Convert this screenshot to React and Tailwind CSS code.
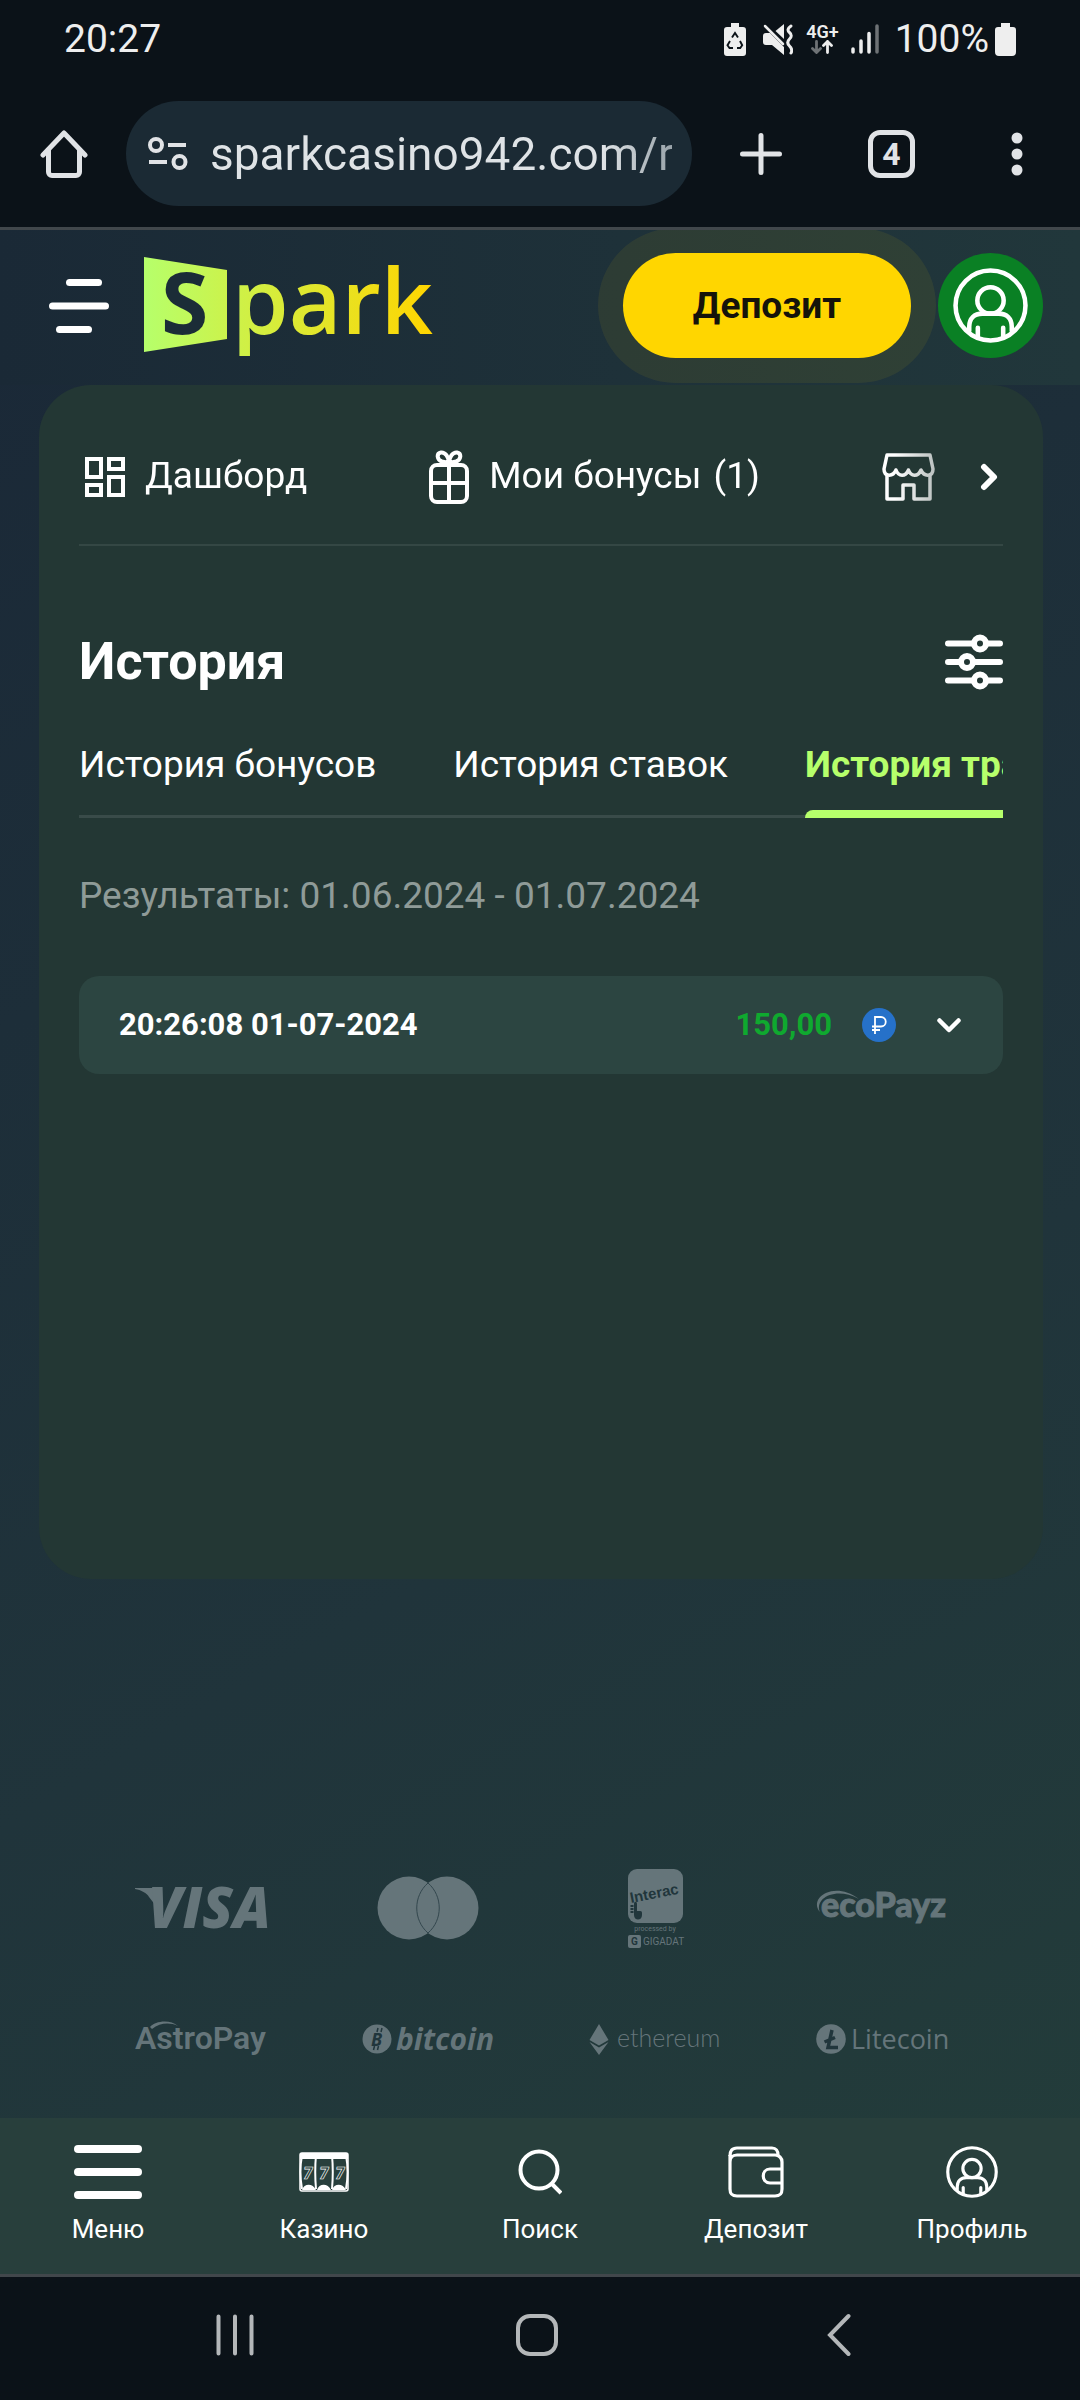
import React from 'react';

const profileLinks = [
  { id: 'dashboard', label: 'Дашборд', Icon: DashboardIcon },
  { id: 'bonuses', label: 'Мои бонусы', count: 1, Icon: GiftIcon },
  { id: 'shop', Icon: ShopIcon },
];

const historyTabs = [
  { id: 'bonuses', label: 'История бонусов' },
  { id: 'bets', label: 'История ставок' },
  { id: 'transactions', label: 'История транзакций' },
];

const bottomLinks = [
  { id: 'menu', label: 'Меню', Icon: MenuIcon },
  { id: 'casino', label: 'Казино', Icon: SlotsIcon },
  { id: 'search', label: 'Поиск', Icon: SearchIcon },
  { id: 'deposit', label: 'Депозит', Icon: WalletIcon },
  { id: 'profile', label: 'Профиль', Icon: ProfileIcon },
];

const payments = [
  { id: 'visa', Logo: VisaLogo },
  { id: 'mastercard', Logo: MastercardLogo },
  { id: 'interac', Logo: InteracLogo },
  { id: 'ecopayz', Logo: EcoPayzLogo },
  { id: 'astropay', Logo: AstroPayLogo },
  { id: 'bitcoin', Logo: BitcoinLogo },
  { id: 'ethereum', Logo: EthereumLogo },
  { id: 'litecoin', Logo: LitecoinLogo },
];

/* ---------- icons ---------- */

function DashboardIcon() {
  return (
    <svg width="40" height="42" viewBox="0 0 40 42" fill="none" stroke="currentColor" strokeWidth="4">
      <path d="M2 3h14v18H2zM24 3h14v10H24zM2 29h14v10H2zM24 21h14v18H24z" />
    </svg>
  );
}

function GiftIcon() {
  return (
    <svg width="40" height="54" viewBox="0 0 40 54" fill="none" stroke="currentColor" strokeWidth="4">
      <rect x="2" y="15" width="36" height="37" rx="6" />
      <path d="M20 14v38M2 33h36" />
      <path d="M20 13C20 7 16 2 12 2.500 7 3.500 8 10 13 11.500zM20 13C20 7 24 2 28 2.500 33 3.500 32 10 27 11.500z" />
    </svg>
  );
}

function ShopIcon() {
  return (
    <svg width="53" height="48" viewBox="0 0 53 48" fill="none" stroke="currentColor" strokeWidth="3.500" strokeLinejoin="round">
      <path d="M5 2h43l3 14c0 8-9 8-12 1-3 7-10 7-12.500 0-3 7-10 7-12.500 0-3 7-12 7-12-1z" />
      <path d="M5 22v24h16V32h11v14h16V22" />
    </svg>
  );
}

function ProfileIcon({ className = 'h-[52px] w-[52px]' }) {
  return (
    <svg className={className} viewBox="0 0 74 74" fill="none" stroke="currentColor" strokeWidth="4.500" strokeLinecap="round">
      <circle cx="37" cy="37" r="34.500" />
      <circle cx="37" cy="32" r="13" />
      <path d="M16 62v-4c0-8 5-13 13-13h16c8 0 13 5 13 13v4" />
      <path d="M24.500 59v9M49.500 59v9" />
    </svg>
  );
}

function MenuIcon() {
  return (
    <svg width="68" height="54" viewBox="0 0 68 54" fill="currentColor">
      <rect width="68" height="8" rx="4" />
      <rect y="23" width="68" height="8" rx="4" />
      <rect y="46" width="68" height="8" rx="4" />
    </svg>
  );
}

function SlotsIcon() {
  return (
    <svg width="50" height="40" viewBox="0 0 50 40" fill="none" stroke="currentColor">
      <rect x="1" y="1" width="48" height="38" rx="2" strokeWidth="1.500" />
      <path d="M1 1h48v6H1z" fill="currentColor" stroke="none" />
      <path d="M3 3c-2 11-2 23 0 34M17 3c-1 11-1 23 0 34M33 3c1 11 1 23 0 34M47 3c2 11 2 23 0 34" strokeWidth="2" />
      <path d="M3 38c2-7 11-7 14 0zM18 38c2-7 11-7 14 0zM33 38c2-7 11-7 14 0z" fill="currentColor" stroke="none" />
      <g strokeWidth="0.600" fontFamily="Roboto, sans-serif" fontSize="16" fontWeight="900" fontStyle="italic" textAnchor="middle">
        <text x="9" y="27">7</text>
        <text x="25" y="27">7</text>
        <text x="41" y="27">7</text>
      </g>
    </svg>
  );
}

function SearchIcon() {
  return (
    <svg width="44" height="46" viewBox="0 0 44 46" fill="none" stroke="currentColor" strokeWidth="4">
      <circle cx="21" cy="21" r="18.500" />
      <path d="M33 34l10 10" />
    </svg>
  );
}

function WalletIcon() {
  return (
    <svg width="56" height="52" viewBox="0 0 56 52" fill="none" stroke="currentColor" strokeWidth="3.200">
      <path d="M2 10c0-5 2-8 7-8h35c4 0 6 3 6 7" />
      <path d="M2 9v34c0 5 2 7 7 7h38c5 0 7-2 7-7V16c0-4-3-7-7-7H9C4 9 2 12 2 16" />
      <path d="M54 23H42c-9 0-9 14 0 14h12" />
    </svg>
  );
}

function FilterIcon() {
  return (
    <svg width="58" height="56" viewBox="0 0 58 56" fill="none" stroke="currentColor" strokeWidth="6" strokeLinecap="round">
      <path d="M3 9.500h26M42 9.500h13M3 28h13M29 28h26M3 46.500h26M42 46.500h13" />
      <circle cx="35" cy="9.500" r="6" />
      <circle cx="22" cy="28" r="6" />
      <circle cx="35" cy="46.500" r="6" />
    </svg>
  );
}

function RecycleBatteryIcon() {
  return (
    <svg width="22" height="33" viewBox="0 0 22 33" fill="#eeeeee">
      <path d="M7 0h8v4h4a3 3 0 0 1 3 3v23a3 3 0 0 1-3 3H3a3 3 0 0 1-3-3V7a3 3 0 0 1 3-3h4z" />
      <path d="M8 14.500l3-4.500 3 4.500M16 18l2.200 4.200-2 2.800H13M9 25H5.500l-2-2.800L6 18" fill="none" stroke="#0b1218" strokeWidth="1.900" />
    </svg>
  );
}

function MutedIcon() {
  return (
    <svg width="30" height="31" viewBox="0 0 30 31" fill="#eeeeee">
      <path d="M0 12c0-2 1-3 3-3h4l14 14v8L9 21H3c-2 0-3-1-3-3z" />
      <path d="M21 0v15L12.500 7z" />
      <path d="M2 2l18 18" stroke="#eeeeee" strokeWidth="2.500" strokeLinecap="round" />
      <path d="M28 2q-5 3.500-1.500 6.500t0 6.500 0 7 1.500 7" fill="none" stroke="#eeeeee" strokeWidth="3" strokeLinecap="round" />
    </svg>
  );
}

function DataArrowsIcon() {
  return (
    <svg width="22" height="14" viewBox="0 0 22 14" fill="none" strokeWidth="2.800" strokeLinecap="round">
      <path d="M5.500 1.500v11M1.500 8.500l4 4 4-4" stroke="#6e7275" />
      <path d="M16.500 12.500v-11M12.500 5.500l4-4 4 4" stroke="#eeeeee" />
    </svg>
  );
}

function SignalIcon() {
  return (
    <svg width="28" height="30" viewBox="0 0 28 30" strokeWidth="3.500" strokeLinecap="round">
      <path d="M2 25v3M10 17v11M18 9.500V28" stroke="#eeeeee" />
      <path d="M26 2v26" stroke="#6e7275" />
    </svg>
  );
}

function BatteryIcon() {
  return (
    <svg width="21" height="33" viewBox="0 0 21 33" fill="#eeeeee">
      <path d="M6 0h9v4h3a3 3 0 0 1 3 3v22a4 4 0 0 1-4 4H4a4 4 0 0 1-4-4V7a3 3 0 0 1 3-3h3z" />
    </svg>
  );
}

/* ---------- logos ---------- */

function SparkLogo() {
  return (
    <svg className="overflow-visible" width="294" height="104" viewBox="0 0 294 104">
      <defs>
        <linearGradient id="spark" gradientUnits="userSpaceOnUse" x1="0" y1="0" x2="288" y2="0">
          <stop offset="0" stopColor="#b6ff6b" />
          <stop offset="1" stopColor="#ffd500" />
        </linearGradient>
      </defs>
      <path d="M0 3l83 13v69L0 98z" fill="url(#spark)" />
      <text x="17" y="80" fontFamily="'Noto Sans', sans-serif" fontSize="86" fontWeight="700" fill="#1b2c37">S</text>
      <text x="88" y="80" fontFamily="'Open Sans', sans-serif" fontSize="91" fontWeight="600" fill="url(#spark)">park</text>
    </svg>
  );
}

function VisaLogo() {
  return (
    <svg className="overflow-visible" width="132" height="80" viewBox="0 0 132 80" fill="currentColor">
      <path d="M0 20h19c3 0 4 2 5 5l4 22-14-18c-2-4-8-7-14-8z" />
      <text x="13" y="60" fontFamily="'Open Sans', sans-serif" fontSize="56" fontWeight="800" fontStyle="italic">VISA</text>
    </svg>
  );
}

function MastercardLogo() {
  return (
    <svg width="132" height="80" viewBox="0 0 132 80" fill="currentColor">
      <circle cx="47" cy="40" r="31.500" />
      <circle cx="85" cy="40" r="31.500" />
      <path d="M66 15c-15 13-15 37 0 50 15-13 15-37 0-50z" fill="none" stroke="#33474e" strokeWidth="1" />
    </svg>
  );
}

function InteracLogo() {
  return (
    <svg className="overflow-visible" width="132" height="80" viewBox="0 0 132 80" fill="currentColor">
      <rect x="39" y="1" width="55" height="54" rx="9" />
      <text transform="translate(42 35) rotate(-11)" fontFamily="'Liberation Sans', sans-serif" fontSize="15" fontWeight="700" fill="#21363c">Interac</text>
      <path d="M45 36c0-3 3-3 3 0v7h3c2 0 2 1 2 3v1c0 6-8 6-8 0z" fill="#21363c" />
      <path d="M43 37v9" stroke="#21363c" strokeWidth="3" strokeDasharray="2 1" />
      <text x="66" y="63" fontFamily="Roboto, sans-serif" fontSize="7" textAnchor="middle">processed by</text>
      <rect x="39" y="67" width="13" height="13" rx="2" />
      <text x="42" y="77" fontFamily="Roboto, sans-serif" fontSize="10" fontWeight="700" fill="#21363c">G</text>
      <text x="54" y="77" fontFamily="Roboto, sans-serif" fontSize="10">GIGADAT</text>
    </svg>
  );
}

function EcoPayzLogo() {
  return (
    <svg className="overflow-visible" width="132" height="80" viewBox="0 0 132 80" fill="currentColor">
      <path d="M4 44C-8 30 18 12 43 31 20 18-2 30 4 44z" />
      <text x="5" y="49" fontFamily="Lato, sans-serif" fontSize="34" fontWeight="900" stroke="currentColor" strokeWidth="1">ecoPayz</text>
    </svg>
  );
}

function AstroPayLogo() {
  return (
    <svg className="overflow-visible" width="132" height="80" viewBox="0 0 132 80" fill="currentColor">
      <path d="M15 27c5-6 20-8 28-1-9-4-18-3-26 3z" />
      <text x="0" y="49" fontFamily="Roboto, sans-serif" fontSize="32" fontWeight="600">AstroPay</text>
    </svg>
  );
}

function BitcoinLogo() {
  return (
    <svg className="overflow-visible" width="132" height="80" viewBox="0 0 132 80" fill="currentColor">
      <circle cx="15" cy="39" r="14.500" />
      <text x="9" y="46" fontFamily="'Noto Sans', sans-serif" fontSize="18" fontWeight="700" fontStyle="italic" fill="#21363c">B</text>
      <path d="M15 32l1-4M19 32l1-4M11.500 50l1-4M15.500 50l1-4" stroke="#21363c" strokeWidth="1.500" />
      <text x="34" y="50" fontFamily="'Open Sans', sans-serif" fontSize="30" fontWeight="700" fontStyle="italic">bitcoin</text>
    </svg>
  );
}

function EthereumLogo() {
  return (
    <svg className="overflow-visible" width="132" height="80" viewBox="0 0 132 80" fill="currentColor">
      <path d="M10 24l9.500 16-9.500 5.500L.5 40zM.5 42l9.500 5.500 9.500-5.500L10 55z" />
      <text x="28" y="47" fontFamily="Lato, sans-serif" fontSize="25" fontWeight="300">ethereum</text>
    </svg>
  );
}

function LitecoinLogo() {
  return (
    <svg className="overflow-visible" width="132" height="80" viewBox="0 0 132 80" fill="currentColor">
      <circle cx="15" cy="39" r="14.800" />
      <path d="M16 30l-4 17.500h10M8.500 42l10.500-4.500" fill="none" stroke="#21363c" strokeWidth="3.500" />
      <text x="35" y="49" fontFamily="'Open Sans', sans-serif" fontSize="27">Litecoin</text>
    </svg>
  );
}

/* ---------- browser chrome ---------- */

function StatusBar() {
  return (
    <div className="flex h-20 items-center justify-between px-16 pb-0.5 text-[39px] leading-none text-[#eeeeee]">
      <span>20:27</span>
      <div className="flex items-center">
        <RecycleBatteryIcon />
        <span className="ml-[17px]"><MutedIcon /></span>
        <span className="ml-[13px] flex flex-col items-center">
          <span className="text-lg leading-4 font-semibold">4G+</span>
          <DataArrowsIcon />
        </span>
        <span className="ml-3"><SignalIcon /></span>
        <span className="ml-4 mr-1.5">100%</span>
        <BatteryIcon />
      </div>
    </div>
  );
}

function Toolbar() {
  return (
    <div className="flex h-[147px] items-center pl-10 pr-[57px] text-[#e1e3e6]">
      <button aria-label="Домой">
        <svg width="48" height="48" viewBox="0 0 48 48" fill="none" stroke="currentColor" strokeWidth="5" strokeLinecap="round" strokeLinejoin="round">
          <path d="M3 25L24 3l21 22M8.500 20v22a3.500 3.500 0 0 0 3.500 3.500h24a3.500 3.500 0 0 0 3.500-3.500V20" />
        </svg>
      </button>
      <div className="ml-[38px] flex h-[105px] min-w-0 flex-1 items-center rounded-full bg-[#1b2a34] pl-[22px] pr-5">
        <svg className="shrink-0" width="40" height="34" viewBox="0 0 40 34" fill="none" stroke="currentColor" strokeWidth="4">
          <circle cx="8" cy="8" r="6" />
          <path d="M20 8h18M1 25h18" />
          <circle cx="31.500" cy="25" r="6" />
        </svg>
        <input
          type="text"
          aria-label="Адрес"
          defaultValue="sparkcasino942.com/r"
          className="ml-[22px] w-full min-w-0 bg-transparent bg-gradient-to-r from-[#dfe3e6] from-85% to-[#9aa4aa] bg-clip-text text-[46px] leading-[60px] text-transparent outline-none"
        />
      </div>
      <button aria-label="Новая вкладка" className="ml-12">
        <svg width="42" height="42" viewBox="0 0 42 42" stroke="currentColor" strokeWidth="5" strokeLinecap="round">
          <path d="M21 2.500v37M2.500 21h37" />
        </svg>
      </button>
      <button className="ml-[86px] flex h-12 w-[47px] items-center justify-center rounded-xl border-5 border-current text-[32px] leading-none font-bold">
        4
      </button>
      <button aria-label="Ещё" className="ml-[96px]">
        <svg width="12" height="44" viewBox="0 0 12 44" fill="currentColor">
          <circle cx="6" cy="6" r="5.500" />
          <circle cx="6" cy="22" r="5.500" />
          <circle cx="6" cy="38" r="5.500" />
        </svg>
      </button>
    </div>
  );
}

function SystemBar() {
  return (
    <div className="grid h-[126px] grid-cols-3 items-center justify-items-center border-t-3 border-[#41474b] bg-[#0b1218] pb-2 pl-[84px] pr-[90px] text-[#b4b7b9]">
      <button aria-label="Недавние">
        <svg width="38" height="42" viewBox="0 0 38 42" stroke="currentColor" strokeWidth="4" strokeLinecap="round">
          <path d="M2.500 2.500v37M19 2.500v37M35.500 2.500v37" />
        </svg>
      </button>
      <button aria-label="Главный экран">
        <svg width="42" height="42" viewBox="0 0 42 42" fill="none" stroke="currentColor" strokeWidth="4">
          <rect x="2" y="2" width="38" height="38" rx="12" />
        </svg>
      </button>
      <button aria-label="Назад">
        <svg width="24" height="44" viewBox="0 0 24 44" fill="none" stroke="currentColor" strokeWidth="4" strokeLinecap="round">
          <path d="M21.500 3L3 22l18.500 19" />
        </svg>
      </button>
    </div>
  );
}

/* ---------- site ---------- */

function SiteHeader() {
  return (
    <header className="flex h-[155px] items-center overflow-hidden bg-gradient-to-r from-[#1a2936] to-[#21373b] pb-1 pl-[49px] pr-[37px]">
      <button aria-label="Меню" className="text-white">
        <svg width="60" height="54" viewBox="0 0 60 54" fill="currentColor">
          <rect x="17" width="36" height="7" rx="3.500" />
          <rect y="23.500" width="60" height="7" rx="3.500" />
          <rect x="7" y="47" width="36" height="7" rx="3.500" />
        </svg>
      </button>
      <a href="#home" aria-label="Spark" className="ml-[35px]"><SparkLogo /></a>
      <button className="ml-auto h-[105px] w-72 rounded-full bg-[#ffd600] text-[37px] font-bold text-[#15130a] shadow-[0_0_0_25px_rgba(255,214,0,0.07)]">
        Депозит
      </button>
      <button aria-label="Профиль" className="ml-[27px] flex size-[105px] items-center justify-center rounded-full bg-[#0a8024] text-white">
        <ProfileIcon className="size-[75px]" />
      </button>
    </header>
  );
}

function ProfileNav() {
  return (
    <nav className="flex h-[161px] items-center border-b-2 border-[#344744] pt-6">
      <ul className="flex min-w-0 flex-1 items-center gap-[122px] overflow-hidden pl-[6px] [mask-image:linear-gradient(to_right,#000_94%,#0009)]">
        {profileLinks.map(({ id, label, count, Icon }) => (
          <li key={id} className="shrink-0">
            <a href={`#${id}`} aria-label={label ? undefined : 'Магазин'} className="flex items-center gap-5">
              <Icon />
              {label && (
                <span className="flex gap-3 pb-0.5">
                  {label}
                  {count && <span>({count})</span>}
                </span>
              )}
            </a>
          </li>
        ))}
      </ul>
      <button aria-label="Вперёд" className="flex w-14 justify-end pr-[5px]">
        <svg width="18" height="28" viewBox="0 0 18 28" fill="none" stroke="currentColor" strokeWidth="6" strokeLinecap="round" strokeLinejoin="round">
          <path d="M4 4l10 10L4 24" />
        </svg>
      </button>
    </nav>
  );
}

function HistoryTabs() {
  return (
    <div role="tablist" className="flex gap-[77px] overflow-hidden pt-[49px] shadow-[inset_0_-3px_0_#394b49]">
      {historyTabs.map((tab) => {
        const active = tab.id === 'transactions';
        return (
          <button
            key={tab.id}
            role="tab"
            aria-selected={active}
            className={active ? 'shrink-0 font-bold whitespace-nowrap text-[#b6ff6b]' : 'shrink-0 whitespace-nowrap'}
          >
            <span className="block pb-[21px] leading-12">{tab.label}</span>
            <span className={active ? 'block h-2 rounded-t-lg bg-[#b6ff6b]' : 'block h-2'} />
          </button>
        );
      })}
    </div>
  );
}

function TransactionRow({ time, amount }) {
  return (
    <button className="mt-14 flex h-[98px] w-full items-center rounded-[20px] bg-[#2c4541] pl-10 pr-[42px] text-[31px] font-bold">
      <span>{time}</span>
      <span className="ml-auto text-[#0fa92f]">{amount}</span>
      <svg className="ml-[30px]" width="34" height="34" viewBox="0 0 34 34">
        <circle cx="17" cy="17" r="17" fill="#2671c9" />
        <path d="M13 26V9h6a4.500 4.500 0 0 1 0 9.500h-9M10 22h8" fill="none" stroke="#fff" strokeWidth="1.800" />
      </svg>
      <svg className="ml-[41px]" width="24" height="15" viewBox="0 0 24 15" fill="none" stroke="currentColor" strokeWidth="4.500" strokeLinecap="round" strokeLinejoin="round">
        <path d="M2.500 2.500L12 12l9.500-9.500" />
      </svg>
    </button>
  );
}

function BottomNav() {
  return (
    <nav className="grid h-[156px] grid-cols-5 bg-[#283f3c] pt-[27px] text-[26px] leading-8">
      {bottomLinks.map(({ id, label, Icon }) => (
        <a key={id} href={`#${id}`} className="flex flex-col items-center gap-3.5">
          <span className="flex h-[54px] items-center"><Icon /></span>
          {label}
        </a>
      ))}
    </nav>
  );
}

export default function App() {
  return (
    <div className="flex min-h-screen flex-col bg-[#0b1218] font-[Roboto,sans-serif] text-white">
      <div className="border-b-3 border-[#41474b]">
        <StatusBar />
        <Toolbar />
      </div>

      <div className="flex flex-1 flex-col bg-[linear-gradient(150deg,#1a2837_0%,#20343b_60%,#233d3a_100%)]">
        <SiteHeader />

        <main className="mr-[37px] ml-[39px] flex-1 rounded-[52px] bg-[#233734] px-10 text-[37px]">
          <ProfileNav />
          <div className="flex items-center justify-between pt-[86px]">
            <h1 className="text-[52px] leading-[60px] font-bold">История</h1>
            <button aria-label="Фильтр"><FilterIcon /></button>
          </div>
          <HistoryTabs />
          <p className="pt-[54px] leading-12 text-[#8f9b98]">Результаты: 01.06.2024 - 01.07.2024</p>
          <TransactionRow time="20:26:08 01-07-2024" amount="150,00" />
        </main>

        <footer className="grid grid-cols-4 justify-items-center gap-y-[52px] pt-[289px] pr-[84px] pb-[38px] pl-[87px] text-[#65757a]">
          {payments.map(({ id, Logo }) => (
            <Logo key={id} />
          ))}
        </footer>

        <BottomNav />
      </div>

      <SystemBar />
    </div>
  );
}
